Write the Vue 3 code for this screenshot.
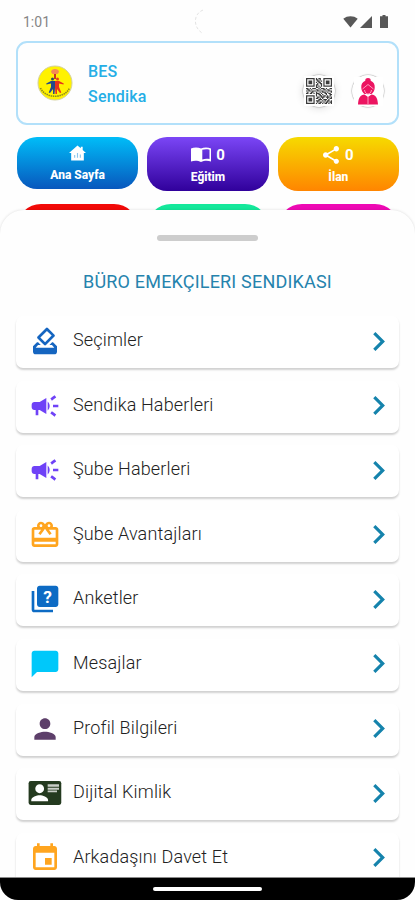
<script setup>
import { ref } from 'vue'

const tiles = [
  { label: 'Ana Sayfa', icon: 'home', theme: 'blue' },
  { label: 'Eğitim', icon: 'book', count: 0, theme: 'purple' },
  { label: 'İlan', icon: 'share', count: 0, theme: 'amber' }
]

const hiddenTiles = ['red', 'green', 'pink']

const menu = ref([
  {
    label: 'Seçimler',
    color: '#1565c0',
    path: 'M18 13h-.68l-2 2h1.91L19 17H5l1.78-2h2.05l-2-2H6l-3 3v4c0 1.1.89 2 1.99 2H19c1.1 0 2-.89 2-2v-4l-3-3zM11.34 15.02c.39.39 1.02.39 1.41 0l6.36-6.36c.39-.39.39-1.02 0-1.41L14.16 2.3a1 1 0 0 0-1.41-.01L6.39 8.66c-.39.39-.39 1.02 0 1.41l4.95 4.95zm2.12-10.61L17 7.95l-4.95 4.95-3.54-3.54 4.95-4.95z'
  },
  { label: 'Sendika Haberleri', icon: 'megaphone', color: '#6f42f7' },
  { label: 'Şube Haberleri', icon: 'megaphone', color: '#6f42f7' },
  {
    label: 'Şube Avantajları',
    color: '#ffa51f',
    path: 'M20 6h-2.18c.11-.31.18-.65.18-1 0-1.66-1.34-3-3-3-1.05 0-1.96.54-2.5 1.35l-.5.67-.5-.68C10.96 2.54 10.05 2 9 2 7.34 2 6 3.34 6 5c0 .35.07.69.18 1H4c-1.11 0-1.99.89-1.99 2L2 19c0 1.11.89 2 2 2h16c1.11 0 2-.89 2-2V8c0-1.11-.89-2-2-2zm-5-2c.55 0 1 .45 1 1s-.45 1-1 1-1-.45-1-1 .45-1 1-1zM9 4c.55 0 1 .45 1 1s-.45 1-1 1-1-.45-1-1 .45-1 1-1zm11 15H4v-2h16v2zm0-5H4V8h5.08L7 10.83 8.62 12 11 8.76l1-1.36 1 1.36L15.38 12 17 10.83 14.92 8H20v6z'
  },
  { label: 'Anketler', icon: 'quiz', color: '#0d6bc4' },
  {
    label: 'Mesajlar',
    color: '#00c8fa',
    path: 'M20 2H4c-1.1 0-2 .9-2 2v18l4-4h14c1.1 0 2-.9 2-2V4c0-1.1-.9-2-2-2z'
  },
  {
    label: 'Profil Bilgileri',
    color: '#5d3f6a',
    path: 'M12 12c2.21 0 4-1.79 4-4s-1.79-4-4-4-4 1.79-4 4 1.79 4 4 4zm0 2c-2.67 0-8 1.34-8 4v2h16v-2c0-2.66-5.33-4-8-4z'
  },
  { label: 'Dijital Kimlik', icon: 'idcard', color: '#243a1f' },
  {
    label: 'Arkadaşını Davet Et',
    color: '#ffa51f',
    path: 'M17 12h-5v5h5v-5zM16 1v2H8V1H6v2H5c-1.11 0-1.99.9-1.99 2L3 19c0 1.1.89 2 2 2h14c1.1 0 2-.9 2-2V5c0-1.1-.9-2-2-2h-1V1h-2zm3 18H5V8h14v11z'
  }
])

// QR modules
const qrRows = [
  '111111101011001111111',
  '100000101101001000001',
  '101110100110101011101',
  '101110101011001011101',
  '101110100101101011101',
  '100000101100101000001',
  '111111101010101111111',
  '000000001101000000000',
  '110101110010111010011',
  '011010001101001101100',
  '101101110110110010111',
  '010011001001011101001',
  '110110101110100110110',
  '000000001011010010011',
  '111111101001101101010',
  '100000100110111011101',
  '101110101101010001011',
  '101110100011101110100',
  '101110101110010101101',
  '100000100101101011011',
  '111111101011010110101'
]

const qrPath = qrRows
  .flatMap((row, y) => [...row].map((c, x) => (c === '1' ? `M${x} ${y}h1v1h-1z` : '')))
  .join('')
</script>

<template>
  <div class="screen">
    <header class="status-bar">
      <span class="time">1:01</span>
      <svg class="camera" viewBox="0 0 12 26"><path d="M8 1C-2 5-2 18 7 24" /></svg>
      <div class="status-icons">
        <svg class="wifi" viewBox="0 0 16 13"><path d="M8 13L.3 3.5C4.6 0 11.400 0 15.700 3.500z" /></svg>
        <svg class="signal" viewBox="0 0 12 12"><path d="M12 0v12H0z" /></svg>
        <svg class="battery" viewBox="0 0 8 13"><path d="M2.500 0h3v1.300H8V13H0V1.300h2.500z" /></svg>
      </div>
    </header>

    <section class="profile-card">
      <svg class="emblem" viewBox="0 0 36 36">
        <circle cx="18" cy="18" r="17" fill="#fff200" stroke="#d3d0a0" stroke-width="1" />
        <path d="M3.500 23c5 11 24 11 29 0" fill="none" stroke="#8f8c1c" stroke-width="1.600" stroke-dasharray="1.500 .7" />
        <path d="M14 7c0-4 8-4 8 0l-1.500 2h-5z" fill="#f58a55" />
        <path d="M17 9h2v5h-2z" fill="#c73522" />
        <circle cx="15.500" cy="14" r="1.500" fill="#244b66" />
        <circle cx="20.500" cy="14" r="1.500" fill="#e33e20" />
        <path d="M14 16h4v7l-.5 6h-1.500v-5l-3 4-1.300-.6L14 22v-3.500l-4.500 1-.3-1z" fill="#244b8a" />
        <path d="M22 16h-4v7l.5 6h1.500v-5l3 4 1.300-.6L22 22v-3.500l4.500 1 .3-1z" fill="#e8331c" />
      </svg>
      <div class="profile-name">
        <span>BES</span>
        <span>Sendika</span>
      </div>
      <div class="round-btn">
        <svg class="qr" viewBox="0 0 21 21"><path :d="qrPath" /></svg>
      </div>
      <div class="round-btn flat">
        <div class="avatar-box">
          <svg class="avatar" viewBox="0 0 20 27">
            <path d="M10 0c2 0 3 1.300 2.700 2.800C15.800 4 17 6.500 16.700 10c-.2 3-1.700 5-3.200 6h-7C5 15 3.500 13 3.300 10 3 6.500 4.200 4 7.300 2.800 7 1.300 8 0 10 0z" />
            <path d="M6.500 16.500L10 19l3.500-2.500c4 .5 6 2.500 6.500 10H0c.5-7.500 2.500-9.500 6.500-10z" />
            <path class="line" d="M4.500 11L10 6.500l5.500 4.500M6.500 12c.5 3 2 4 3.500 4s3-1 3.500-4M10 19v7" />
          </svg>
        </div>
      </div>
    </section>

    <section class="tiles">
      <div v-for="tile in tiles" :key="tile.label" class="tile" :class="tile.theme">
        <div class="tile-top">
          <svg v-if="tile.icon === 'home'" class="home" viewBox="0 0 18 16">
            <path d="M9 0l3.500 3V1.500h2v3.300L18 8h-2.300v8H2.300V8H0z" />
            <path class="home-line" d="M6 13v-3M9 13V8M12 13V9.500" />
          </svg>
          <svg v-else-if="tile.icon === 'book'" class="book" viewBox="0 0 20 15">
            <path d="M0 1.500C3 .2 7 .2 10 1.500 13 .2 17 .2 20 1.500V14.500c-3-1-7-1-10 .5-3-1.500-7-1.500-10-.5zM11.300 2.800v9.700c2.400-.8 4.800-.9 7.200-.4V2.700c-2.400-.6-4.800-.6-7.200.1z" fill-rule="evenodd" />
          </svg>
          <svg v-else class="share" viewBox="3 2 18 20">
            <path d="M18 16.080c-.76 0-1.440.3-1.960.77L8.910 12.700c.05-.23.09-.46.09-.7s-.04-.47-.09-.7l7.050-4.110c.54.5 1.250.81 2.040.81 1.660 0 3-1.340 3-3s-1.340-3-3-3-3 1.340-3 3c0 .24.04.47.09.7L8.040 9.810C7.500 9.310 6.790 9 6 9c-1.660 0-3 1.340-3 3s1.340 3 3 3c.79 0 1.500-.31 2.040-.81l7.120 4.160c-.05.21-.08.43-.08.65 0 1.610 1.310 2.920 2.920 2.920s2.920-1.310 2.920-2.920-1.310-2.920-2.920-2.920z" />
          </svg>
          <span v-if="tile.count !== undefined" class="count">{{ tile.count }}</span>
        </div>
        <span class="tile-label">{{ tile.label }}</span>
      </div>
      <div v-for="theme in hiddenTiles" :key="theme" class="tile" :class="theme"></div>
    </section>

    <main class="sheet">
      <div class="handle"></div>
      <h1>BÜRO EMEKÇILERI SENDIKASI</h1>
      <ul class="menu">
        <li v-for="item in menu" :key="item.label" class="menu-item">
          <svg class="menu-icon" viewBox="0 0 24 24" :fill="item.color">
            <path v-if="item.path" :d="item.path" />
            <path
              v-else-if="item.icon === 'megaphone'"
              d="M18 11v2h4v-2h-4zm-2 6.610c.96.71 2.210 1.650 3.200 2.390.4-.53.8-1.070 1.200-1.600-.99-.74-2.240-1.680-3.200-2.400-.4.54-.8 1.080-1.200 1.610zM20.400 5.600c-.4-.53-.8-1.070-1.200-1.600-.99.74-2.240 1.680-3.200 2.400.4.53.8 1.070 1.200 1.600.96-.72 2.210-1.650 3.200-2.400zM4 9c-1.100 0-2 .9-2 2v2c0 1.100.9 2 2 2h1v4h2v-4h1l5 3V6L8 9H4zm11.500 3c0-1.330-.58-2.530-1.500-3.350v6.690c.92-.81 1.500-2.010 1.500-3.340z"
            />
            <g v-else-if="item.icon === 'quiz'">
              <path d="M4 6H2v14c0 1.100.9 2 2 2h14v-2H4V6zm16-4H8c-1.100 0-2 .9-2 2v12c0 1.100.9 2 2 2h12c1.100 0 2-.9 2-2V4c0-1.100-.9-2-2-2z" />
              <text class="quiz-mark" x="14" y="15" text-anchor="middle">?</text>
            </g>
            <g v-else>
              <rect x="-.3" y="3" width="24.500" height="18" rx="1.600" />
              <path class="id-detail" d="M8 5.500a3.300 3.300 0 1 1 0 6.600 3.300 3.300 0 0 1 0-6.600zM1.700 18.200v-1c0-2.200 4.200-3.600 6.300-3.600s6.300 1.400 6.300 3.600v1z" />
              <path class="id-lines" d="M14 5.500h8.500v1.800H14zM14 8h8.500v1.500H14zM14 10.200h7v1.300h-7z" />
            </g>
          </svg>
          <span class="menu-label">{{ item.label }}</span>
          <svg class="chevron" viewBox="8.500 6 7.500 12"><path d="M10 6L8.590 7.410 13.170 12l-4.580 4.590L10 18l6-6z" /></svg>
        </li>
      </ul>
    </main>

    <footer class="nav-bar"><div class="nav-pill"></div></footer>
  </div>
</template>

<style>
body {
  background: #fff;
  overflow: hidden;
}
</style>

<style scoped>
.screen {
  display: flex;
  flex-direction: column;
  width: 415px;
  height: 900px;
  overflow: hidden;
  background: #fefefe;
  font-family: Roboto, "Noto Sans", sans-serif;
}

.status-bar {
  display: flex;
  flex: none;
  align-items: center;
  height: 41px;
  padding: 2px 27px 0 23px;
  box-sizing: border-box;
}

.time {
  width: 172px;
  font-size: 14px;
  color: #858585;
}

.camera {
  width: 12px;
  height: 26px;
  margin-right: auto;
  fill: none;
  stroke: #dcdcdc;
  stroke-width: 0.8;
  stroke-dasharray: 3 2;
}

.status-icons {
  display: flex;
  align-items: center;
  gap: 2px;
  fill: #585858;
}

.wifi {
  width: 15px;
  height: 13px;
}

.signal {
  width: 12px;
  height: 12px;
}

.battery {
  width: 8px;
  height: 13px;
  margin-left: 6px;
}

.profile-card {
  display: flex;
  flex: none;
  align-items: center;
  height: 84px;
  margin: 0 16px;
  padding: 0 13px 0 19px;
  border: 2px solid #b2e0fa;
  border-radius: 11px;
  box-sizing: border-box;
}

.emblem {
  width: 36px;
  height: 36px;
}

.profile-name {
  display: flex;
  flex: 1;
  flex-direction: column;
  margin: 3px 0 0 15px;
  font-size: 16px;
  font-weight: 500;
  line-height: 24.500px;
  letter-spacing: 0.2px;
  color: #25aee6;
}

.round-btn {
  display: flex;
  align-items: center;
  justify-content: center;
  width: 32px;
  height: 32px;
  margin: 16px 0 0 17px;
  border-radius: 50%;
  box-shadow: 0 0 1px 0.5px #b4b4b4, 0 1px 8px rgba(0, 0, 0, 0.14);
}

.round-btn.flat {
  box-shadow: 0 0 1px 0.5px #b8b8b8;
}

/* white squares leave only four arcs of the ring visible */
.qr {
  flex: none;
  width: 26px;
  height: 26px;
  border: 2px solid #fff;
  background: #fff;
  fill: #3c3c3c;
}

.avatar-box {
  display: flex;
  flex: none;
  align-items: center;
  justify-content: center;
  width: 29px;
  height: 29px;
  background: #fff;
}

.avatar {
  width: 20px;
  height: 27px;
  fill: #ec1561;
}

.avatar .line {
  fill: none;
  stroke: #ff9bbd;
  stroke-width: 1;
}

.tiles {
  display: grid;
  flex: none;
  grid-template-columns: repeat(3, 1fr);
  grid-template-rows: 54px 54px;
  gap: 13px 9px;
  height: 73px;
  margin: 12px 16px 0 17px;
}

.tile {
  display: flex;
  flex-direction: column;
  align-items: center;
  border-radius: 20px;
  color: #fff;
}

.tile.blue {
  height: 52px;
  background: linear-gradient(#00bdf8, #0857bd);
}

.tile.purple {
  background: linear-gradient(#7b46f6, #30009b);
}

.tile.amber {
  background: linear-gradient(#f6da00, #ff8500);
}

.tile.red {
  border-radius: 24px;
  background: #f20a08;
}

.tile.green {
  border-radius: 24px;
  background: #14e89b;
}

.tile.pink {
  border-radius: 24px;
  background: #ee09b4;
}

.tile-top {
  display: flex;
  align-items: center;
  justify-content: center;
  gap: 5px;
  height: 19px;
  margin-top: 8px;
  fill: #fff;
}

.blue .tile-top {
  margin-top: 6px;
}

.home {
  width: 17px;
  height: 16px;
}

.home-line {
  stroke: #8bc6ed;
  stroke-width: 1.200;
}

.book {
  width: 20px;
  height: 15px;
}

.share {
  width: 16px;
  height: 18px;
}

.amber .tile-top {
  gap: 6px;
}

.count {
  font-size: 15px;
  font-weight: 700;
}

.tile-label {
  margin-top: 5px;
  font-size: 12px;
  font-weight: 800;
  line-height: 16px;
}

.sheet {
  position: relative;
  display: flex;
  flex: 1;
  flex-direction: column;
  align-items: center;
  min-height: 0;
  overflow: hidden;
  border-radius: 24px 24px 0 0;
  background: #fefefe;
  box-shadow: 0 0 3px rgba(0, 0, 0, 0.14);
}

.handle {
  flex: none;
  width: 101px;
  height: 6px;
  margin-top: 25px;
  border-radius: 3px;
  background: #cdcdcd;
}

h1 {
  flex: none;
  margin: 29px 0 0;
  font-size: 18px;
  font-weight: 400;
  line-height: 24px;
  letter-spacing: 0.190px;
  color: #2583ad;
}

.menu {
  display: flex;
  flex-direction: column;
  gap: 12.600px;
  width: 383px;
  margin: 22px 0 0;
  padding: 0;
  list-style: none;
}

.menu-item {
  display: flex;
  flex: none;
  align-items: center;
  height: 52px;
  padding: 0 14px 2px 13px;
  border-radius: 7px;
  box-sizing: border-box;
  background: #fff;
  box-shadow: 0 2px 2px rgba(0, 0, 0, 0.18);
}

.menu-icon {
  width: 32px;
  height: 32px;
  overflow: visible;
}

.quiz-mark {
  fill: #fff;
  font-size: 13px;
  font-weight: 700;
}

.id-detail {
  fill: #fff;
}

.id-lines {
  fill: #c9cec8;
}

.menu-label {
  flex: 1;
  margin-left: 12px;
  padding-bottom: 2px;
  font-size: 18px;
  font-weight: 300;
  line-height: 24px;
  letter-spacing: 0.150px;
  color: #222;
}

.chevron {
  width: 12px;
  height: 19px;
  fill: #1583ac;
}

.nav-bar {
  position: relative;
  display: flex;
  flex: none;
  justify-content: center;
  height: 23px;
  border-top: 1px solid #8a8a8a;
  border-radius: 0 0 18px 18px;
  box-sizing: border-box;
  background: #000;
}

.nav-pill {
  width: 109px;
  height: 4px;
  margin-top: 9px;
  border-radius: 2px;
  background: #fff;
}
</style>
